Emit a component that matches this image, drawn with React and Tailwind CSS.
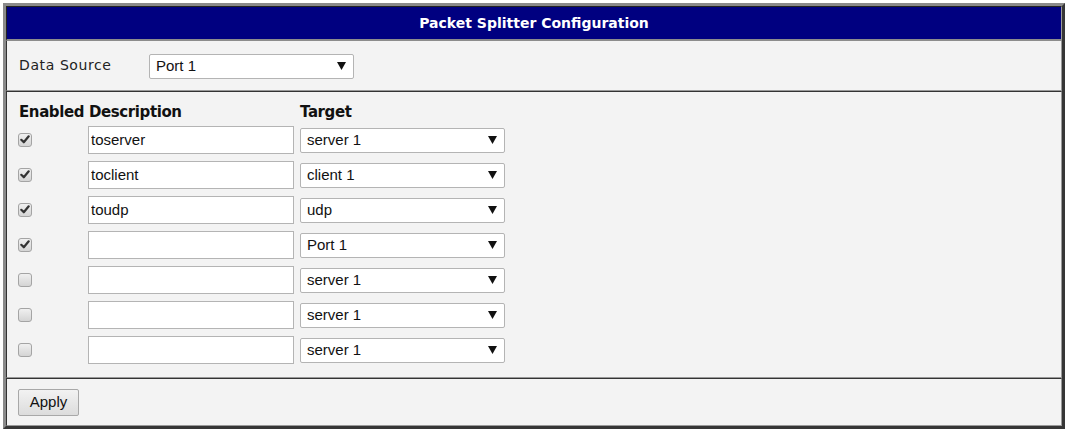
import { useState } from 'react'

const TARGETS = ['server 1', 'client 1', 'udp', 'Port 1']

const INITIAL_ROWS = [
  { enabled: true, description: 'toserver', target: 'server 1' },
  { enabled: true, description: 'toclient', target: 'client 1' },
  { enabled: true, description: 'toudp', target: 'udp' },
  { enabled: true, description: '', target: 'Port 1' },
  { enabled: false, description: '', target: 'server 1' },
  { enabled: false, description: '', target: 'server 1' },
  { enabled: false, description: '', target: 'server 1' },
]

const sans = "font-['Liberation_Sans',Arial,sans-serif]"
const verdana = "font-['DejaVu_Sans',Verdana,sans-serif]"

function Checkbox({ checked, onChange }) {
  return (
    <button type="button" onClick={onChange}
      className="w-[14px] h-[14px] rounded-[3px] border border-[#a4a4a4] bg-gradient-to-b from-[#f0f0f0] to-[#d4d4d4] flex items-center justify-center">
      {checked && (
        <svg width="10" height="9" viewBox="0 0 10 9">
          <path d="M1.3 4.8 L3.8 7.3 L8.7 1.3" fill="none" stroke="#333" strokeWidth="2.2" strokeLinecap="round" strokeLinejoin="round" />
        </svg>
      )}
    </button>
  )
}

function Select({ value, options, onChange }) {
  return (
    <div className="relative w-[205px] h-[25px]">
      <select value={value} onChange={e => onChange(e.target.value)}
        className={`appearance-none w-full h-full bg-white border border-[#b4b4b4] rounded-[2px] pl-[6px] text-[15px] text-[#111] outline-none ${sans}`}>
        {options.map(o => <option key={o} value={o}>{o}</option>)}
      </select>
      <svg className="absolute right-[8px] top-[9px] pointer-events-none" width="9" height="8" viewBox="0 0 9 8">
        <path d="M0 0 H9 L4.5 8 Z" fill="#111" />
      </svg>
    </div>
  )
}

export default function App() {
  const [source, setSource] = useState('Port 1')
  const [rows, setRows] = useState(INITIAL_ROWS)

  function update(i, patch) {
    setRows(prev => prev.map((r, j) => (j === i ? { ...r, ...patch } : r)))
  }

  return (
    <div className="bg-white min-h-screen pt-[3px] pl-[3px]">
      <div className="w-[1062px] border-[3px] border-t-[#8a8a8a] border-l-[#8a8a8a] border-r-[#363636] border-b-[#363636] bg-[#f3f3f3]">
        {/* title */}
        <div className="h-[35px] bg-[#000080] border-l border-t border-[#222] border-r-[#999] border-r border-b-2 border-b-[#8c8c8c] flex items-center justify-center">
          <span className={`text-white font-bold text-[14px] ${verdana}`}>Packet Splitter Configuration</span>
        </div>

        {/* data source */}
        <div className="h-[50px] border-l border-l-[#333] border-r border-r-[#999] border-b border-b-[#999] flex items-center pl-[12px]">
          <span className={`w-[130px] text-[14px] text-[#222] tracking-[0.6px] ${verdana}`}>Data Source</span>
          <Select value={source} options={['Port 1', 'Port 2']} onChange={setSource} />
        </div>

        {/* splitter rules */}
        <div className="border-t border-t-[#333] border-l border-l-[#333] border-r border-r-[#999] border-b border-b-[#999] pt-[10px] pb-[10px] pl-[10px]">
          <div className={`flex h-[20px] items-center font-bold text-[15px] text-[#111] ${verdana}`}>
            <span className="w-[71px] pl-[2px] tracking-[-0.4px]">Enabled</span>
            <span className="w-[212px] pl-[1px] tracking-[-0.4px]">Description</span>
            <span className="tracking-[-0.4px]">Target</span>
          </div>
          {rows.map((row, i) => (
            <div key={i} className="flex h-[35px] items-center">
              <div className="w-[71px] pl-[1px]">
                <Checkbox checked={row.enabled} onChange={() => update(i, { enabled: !row.enabled })} />
              </div>
              <input type="text" value={row.description} onChange={e => update(i, { description: e.target.value })}
                className={`w-[206px] h-[28px] bg-white border border-[#b4b4b4] px-[2px] text-[15px] text-[#111] outline-none ${sans}`} />
              <div className="ml-[6px]">
                <Select value={row.target} options={TARGETS} onChange={v => update(i, { target: v })} />
              </div>
            </div>
          ))}
        </div>

        {/* apply */}
        <div className="h-[48px] border-t border-t-[#333] border-l border-l-[#333] border-r border-r-[#999] border-b border-b-[#999] flex items-center pl-[11px]">
          <button type="button"
            className={`w-[61px] h-[27px] border border-[#a8a8a8] rounded-[2px] bg-gradient-to-b from-[#f2f2f2] to-[#dcdcdc] text-[15px] text-[#111] ${sans}`}>
            Apply
          </button>
        </div>
      </div>
    </div>
  )
}
